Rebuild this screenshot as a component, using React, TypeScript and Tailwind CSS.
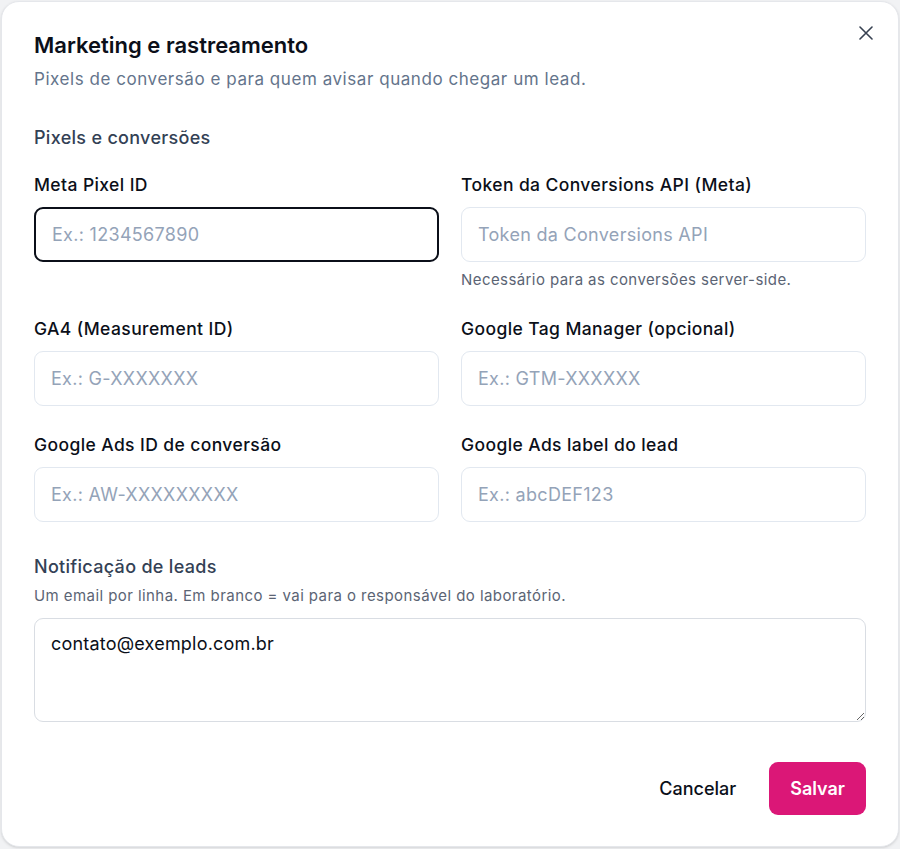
import React from 'react';

type FieldProps = {
  label: string;
  placeholder: string;
  hint?: string;
  focused?: boolean;
};

function Field({ label, placeholder, hint, focused }: FieldProps) {
  return (
    <div className="flex flex-col">
      <label className="text-[17.5px] leading-[24px] font-medium tracking-[0.4px] text-[#0b0f19]">{label}</label>
      <input
        placeholder={placeholder}
        className={`mt-[10px] h-[55px] w-full rounded-[9px] bg-white px-[16px] text-[18px] tracking-[0.3px] text-[#0b0f19] outline-none placeholder:text-[#94a3b8] ${
          focused ? 'border-[2.5px] border-[#0b0f19] px-[15px]' : 'border border-[#e2e8f0]'
        }`}
      />
      {hint && <p className="mt-[8px] text-[15px] leading-[20px] tracking-[0.42px] text-[#5b6474]">{hint}</p>}
    </div>
  );
}

export default function App() {
  return (
    <div
      className="min-h-[849px] w-full bg-[#f1f2f4] p-px"
      style={{ fontFamily: 'Inter, "Noto Sans", sans-serif' }}
    >
      <div className="relative flex h-[846px] flex-col rounded-[18px] border border-[#e5e7eb] bg-white px-[32px] pt-[29px] shadow-sm">
        <button
          className="absolute right-[24px] top-[23px] flex h-[16px] w-[16px] items-center justify-center text-[#374151]"
          aria-label="Fechar"
        >
          <svg width="14" height="14" viewBox="0 0 14 14" fill="none" stroke="currentColor" strokeWidth="1.6" strokeLinecap="round">
            <path d="M1 1L13 13M13 1L1 13" />
          </svg>
        </button>

        <h2 className="text-[22px] leading-[28px] font-semibold text-[#0b0f19]">Marketing e rastreamento</h2>
        <p className="mt-[8px] text-[17px] leading-[24px] tracking-[0.55px] text-[#64748b]">
          Pixels de conversão e para quem avisar quando chegar um lead.
        </p>

        <h3 className="mt-[34px] text-[18px] leading-[26px] font-medium tracking-[0.3px] text-[#334155]">
          Pixels e conversões
        </h3>

        <div className="mt-[22px] grid grid-cols-2 gap-x-[22px] gap-y-[27px]">
          <Field label="Meta Pixel ID" placeholder="Ex.: 1234567890" focused />
          <Field
            label="Token da Conversions API (Meta)"
            placeholder="Token da Conversions API"
            hint="Necessário para as conversões server-side."
          />
          <Field label="GA4 (Measurement ID)" placeholder="Ex.: G-XXXXXXX" />
          <Field label="Google Tag Manager (opcional)" placeholder="Ex.: GTM-XXXXXX" />
          <Field label="Google Ads ID de conversão" placeholder="Ex.: AW-XXXXXXXXX" />
          <Field label="Google Ads label do lead" placeholder="Ex.: abcDEF123" />
        </div>

        <h3 className="mt-[32px] text-[18px] leading-[26px] font-medium tracking-[0.3px] text-[#334155]">
          Notificação de leads
        </h3>
        <p className="mt-[6px] text-[15px] leading-[20px] tracking-[0.43px] text-[#5b6474]">
          Um email por linha. Em branco = vai para o responsável do laboratório.
        </p>
        <textarea
          defaultValue="contato@exemplo.com.br"
          className="mt-[12px] h-[104px] w-full rounded-[9px] border-[1.5px] border-[#d9dde3] px-[16px] py-[12px] text-[18px] leading-[26px] tracking-[0.2px] text-[#0b0f19] outline-none"
        />

        <div className="mt-[40px] flex justify-end gap-[12px]">
          <button className="h-[53px] rounded-[9px] px-[21px] text-[18px] font-medium text-[#0b0f19]">Cancelar</button>
          <button className="h-[53px] rounded-[9px] bg-[#db1777] px-[21px] text-[18px] font-semibold text-white">
            Salvar
          </button>
        </div>
      </div>
    </div>
  );
}
